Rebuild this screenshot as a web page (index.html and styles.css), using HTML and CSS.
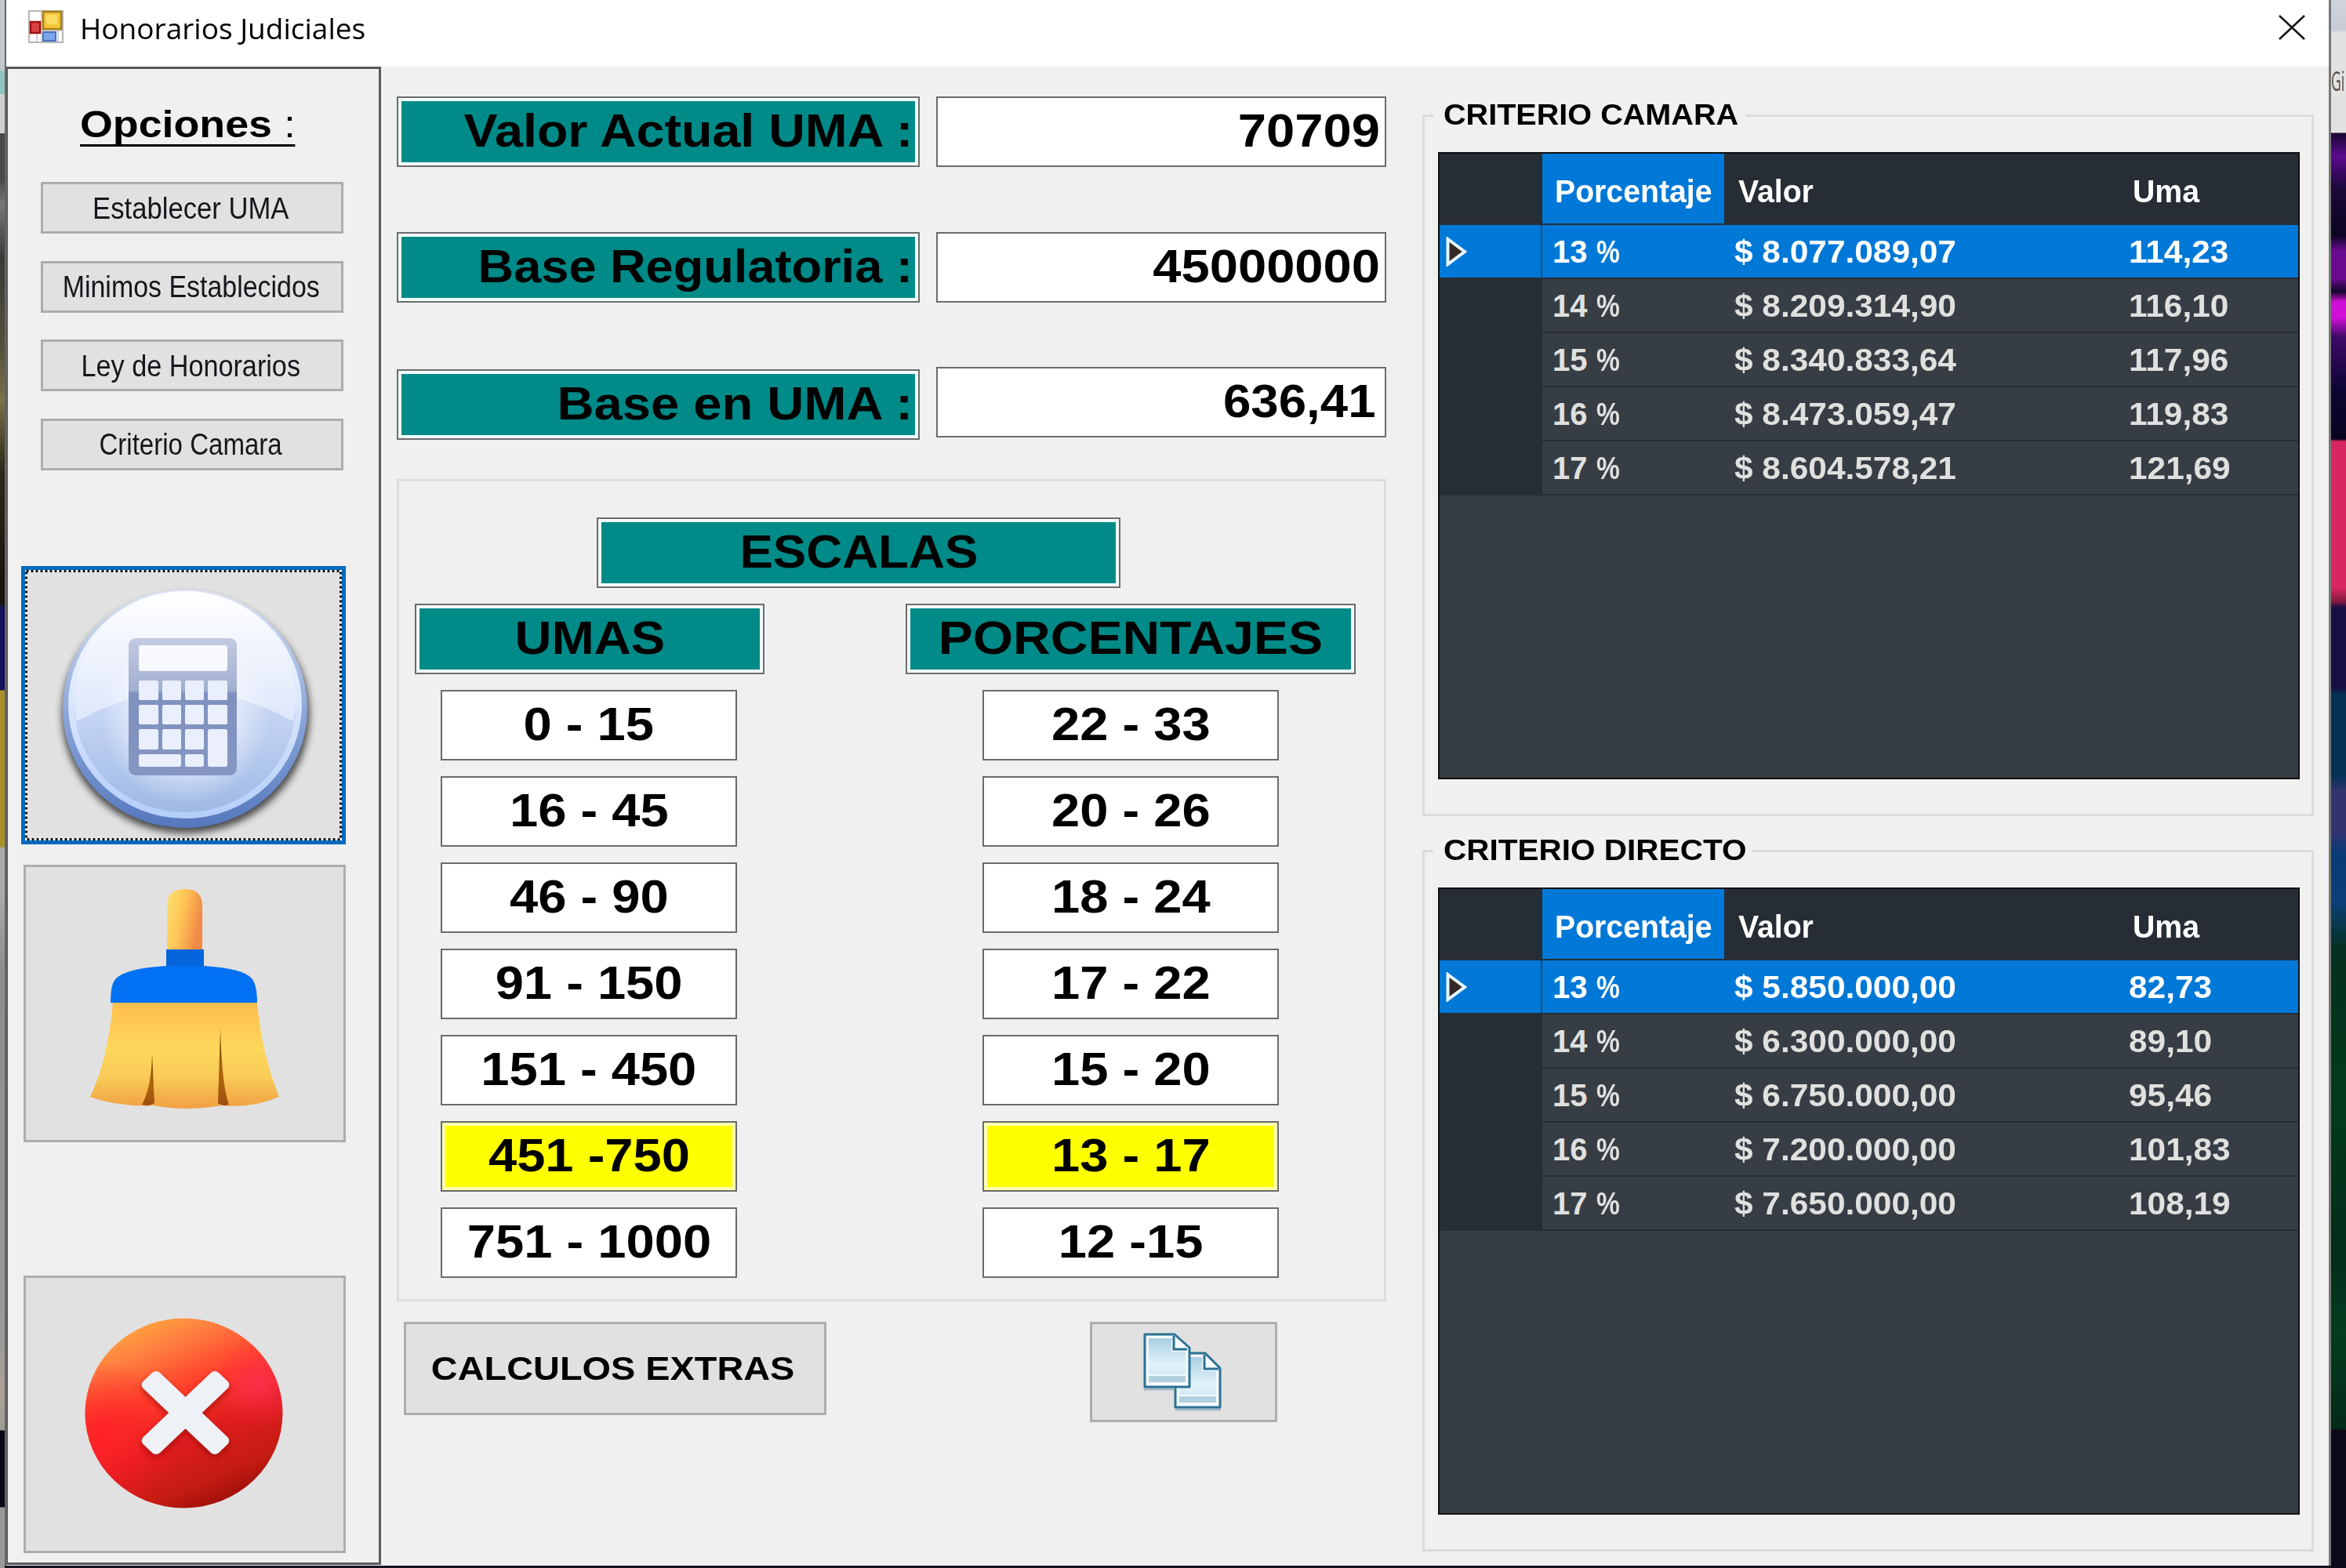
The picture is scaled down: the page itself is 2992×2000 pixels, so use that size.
FILE: index.html
```html
<!DOCTYPE html>
<html lang="es">
<head>
<meta charset="utf-8">
<title>Honorarios Judiciales</title>
<link rel="stylesheet" href="styles.css">
</head>
<body>
<div class="desk desk-left"></div>
<main class="window">
  <header class="titlebar">
    <svg class="app-icon" viewBox="0 0 45 42" width="45" height="42">
      <rect x="1" y="1" width="43" height="40" fill="#fff" stroke="#b5b5b5" stroke-width="2"/>
      <path d="M17 1v40M1 26h43M11 26v15M38 26v15" stroke="#c4c4c4" stroke-width="1.5"/>
      <rect x="19" y="2" width="23" height="22" fill="#f3c738" stroke="#a8801c" stroke-width="2.5"/>
      <rect x="23" y="6" width="14" height="12" fill="#fbdc62"/>
      <rect x="3" y="15" width="12" height="14" fill="#dc4242" stroke="#a01212" stroke-width="2.5"/>
      <rect x="19" y="28" width="16" height="11" fill="#7ba4ea" stroke="#4a72c0" stroke-width="2"/>
    </svg>
    <h1 class="title"><span class="fit">Honorarios Judiciales</span></h1>
    <svg class="close" viewBox="0 0 34 32" width="34" height="32"><path d="M1 1L33 31M33 1L1 31" stroke="#111" stroke-width="2.4"/></svg>
  </header>
  <div class="client">
    <aside class="sidebar">
      <h2 class="options"><span class="fit"><b>Opciones</b> :</span></h2>
      <nav class="menu">
        <button class="btn"><span class="fit">Establecer UMA</span></button>
        <button class="btn"><span class="fit">Minimos Establecidos</span></button>
        <button class="btn"><span class="fit">Ley de Honorarios</span></button>
        <button class="btn"><span class="fit">Criterio Camara</span></button>
      </nav>
      <button class="tile tile-focus" aria-label="Calcular">
        <svg viewBox="27 722 414 355" width="414" height="355">
          <defs>
            <linearGradient id="rim" x1="0" y1="0" x2="0" y2="1"><stop offset="0" stop-color="#dfe6f5"/><stop offset=".5" stop-color="#8ea9dc"/><stop offset="1" stop-color="#5577bd"/></linearGradient>
            <linearGradient id="rim2" x1="0" y1="0" x2="0" y2="1"><stop offset="0" stop-color="#fff"/><stop offset="1" stop-color="#b4cdfa"/></linearGradient>
            <linearGradient id="body" x1="0" y1="0" x2="0" y2="1"><stop offset="0" stop-color="#fff"/><stop offset=".45" stop-color="#cbd9f5"/><stop offset="1" stop-color="#9fb9e6"/></linearGradient>
            <linearGradient id="gloss" x1="0" y1="0" x2="0" y2="1"><stop offset="0" stop-color="#fff"/><stop offset="1" stop-color="#dde7fb"/></linearGradient>
            <linearGradient id="calc" x1="0" y1="0" x2="0" y2="1"><stop offset="0" stop-color="#c3cae0"/><stop offset=".38" stop-color="#a2afd0"/><stop offset=".4" stop-color="#7f91bf"/><stop offset="1" stop-color="#8596c2"/></linearGradient>
            <radialGradient id="glow"><stop offset="0" stop-color="#fff" stop-opacity=".9"/><stop offset=".5" stop-color="#fff" stop-opacity=".6"/><stop offset="1" stop-color="#fff" stop-opacity="0"/></radialGradient>
            <filter id="soft" x="-20%" y="-20%" width="140%" height="140%"><feGaussianBlur stdDeviation="5"/></filter>
          </defs>
          <ellipse cx="237" cy="911" rx="158" ry="152" fill="#333" opacity=".85" filter="url(#soft)"/>
          <ellipse cx="236" cy="904" rx="156" ry="152" fill="url(#rim)"/>
          <ellipse cx="236" cy="899" rx="149" ry="145" fill="url(#rim2)"/>
          <ellipse cx="236" cy="900" rx="141" ry="136" fill="url(#body)"/>
          <path d="M98 920A141 136 0 1 1 374 920Q236 844 98 920Z" fill="url(#gloss)"/>
          <ellipse cx="236" cy="915" rx="108" ry="110" fill="url(#glow)"/>
          <rect x="164" y="814" width="138" height="175" rx="9" fill="url(#calc)"/>
          <g fill="#e9effc">
            <rect x="177" y="823" width="113" height="33" rx="3" fill="#f7f9fe"/>
            <rect x="177" y="868" width="25" height="25" rx="2"/><rect x="207" y="868" width="24" height="25" rx="2"/><rect x="236" y="868" width="24" height="25" rx="2"/><rect x="265" y="868" width="25" height="25" rx="2"/>
            <rect x="177" y="899" width="25" height="25" rx="2"/><rect x="207" y="899" width="24" height="25" rx="2"/><rect x="236" y="899" width="24" height="25" rx="2"/><rect x="265" y="899" width="25" height="25" rx="2"/>
            <rect x="177" y="930" width="25" height="26" rx="2"/><rect x="207" y="930" width="24" height="26" rx="2"/><rect x="236" y="930" width="24" height="26" rx="2"/><rect x="265" y="930" width="25" height="48" rx="3"/>
            <rect x="177" y="962" width="54" height="16" rx="3"/><rect x="236" y="962" width="24" height="16" rx="3"/>
          </g>
          <rect x="33.500" y="728.500" width="401" height="342" fill="none" stroke="#fff" stroke-width="3"/>
          <rect x="33.500" y="728.500" width="401" height="342" fill="none" stroke="#111" stroke-width="3" stroke-dasharray="3 3"/>
        </svg>
      </button>
      <button class="tile tile-clean" aria-label="Limpiar">
        <svg viewBox="30 1103 411 354" width="411" height="354">
          <defs>
            <linearGradient id="handle" x1="0" y1="0" x2="1" y2=".35"><stop offset="0" stop-color="#ffe173"/><stop offset=".5" stop-color="#ffc555"/><stop offset="1" stop-color="#f08a45"/></linearGradient>
            <linearGradient id="skirt" x1="0" y1="0" x2="0" y2="1"><stop offset="0" stop-color="#ffbf4d"/><stop offset=".45" stop-color="#fdd75c"/><stop offset=".7" stop-color="#f9cb57"/><stop offset="1" stop-color="#f0a043"/></linearGradient>
            <linearGradient id="slit" x1="0" y1="0" x2="0" y2="1"><stop offset="0" stop-color="#7a4a08"/><stop offset=".6" stop-color="#b0660c"/><stop offset="1" stop-color="#9c5010"/></linearGradient>
          </defs>
          <path d="M213 1212V1156Q213 1134 236 1134Q258 1134 258 1156V1212Z" fill="url(#handle)"/>
          <path d="M144 1279H328Q334 1345 356 1399Q320 1414 284 1410Q236 1418 196 1410Q150 1412 115 1399Q138 1350 144 1279Z" fill="url(#skirt)"/>
          <path d="M194 1344Q193 1388 181 1409Q190 1412 197 1407Z" fill="url(#slit)"/>
          <path d="M281 1312Q283 1385 292 1409Q284 1412 278 1407Z" fill="url(#slit)"/>
          <path d="M212 1211H260V1232Q310 1235 321 1248Q328 1256 328 1279H141Q141 1256 147 1249Q160 1235 212 1232Z" fill="#0071f3"/>
          <path d="M212 1211H260V1232H212Z" fill="#0565dc"/>
        </svg>
      </button>
      <button class="tile tile-exit" aria-label="Salir">
        <svg viewBox="30 1627 411 354" width="411" height="354">
          <defs>
            <linearGradient id="red" x1=".25" y1="0" x2=".7" y2="1"><stop offset="0" stop-color="#ffaa3c"/><stop offset=".17" stop-color="#ff8040"/><stop offset=".4" stop-color="#ff3f2a"/><stop offset=".62" stop-color="#e01c1e"/><stop offset=".85" stop-color="#c41c12"/><stop offset="1" stop-color="#970c0a"/></linearGradient>
            <radialGradient id="pink" cx=".88" cy=".34" r=".24"><stop offset="0" stop-color="#ff2f58" stop-opacity=".75"/><stop offset="1" stop-color="#ff2f48" stop-opacity="0"/></radialGradient>
            <radialGradient id="left" cx=".08" cy=".62" r=".4"><stop offset="0" stop-color="#ff1f28" stop-opacity=".9"/><stop offset="1" stop-color="#ff1f28" stop-opacity="0"/></radialGradient>
            <filter id="soft2" x="-20%" y="-20%" width="140%" height="140%"><feGaussianBlur stdDeviation="4"/></filter>
          </defs>
          <ellipse cx="234.500" cy="1802.500" rx="126" ry="121" fill="url(#red)"/>
          <ellipse cx="234.500" cy="1802.500" rx="126" ry="121" fill="url(#left)"/>
          <ellipse cx="234.500" cy="1802.500" rx="126" ry="121" fill="url(#pink)"/>
          <g transform="translate(236.500 1806) scale(1 .95)" fill="#8c0808" opacity=".65" filter="url(#soft2)"><rect x="-68" y="-15" width="136" height="30" rx="7" transform="rotate(45)"/><rect x="-68" y="-15" width="136" height="30" rx="7" transform="rotate(-45)"/></g>
          <g transform="translate(236.500 1802) scale(1 .95)" fill="#eef1f6"><rect x="-68" y="-15" width="136" height="30" rx="7" transform="rotate(45)"/><rect x="-68" y="-15" width="136" height="30" rx="7" transform="rotate(-45)"/></g>
        </svg>
      </button>
    </aside>

    <section class="center">
      <div class="row"><label class="tag"><span class="fit">Valor Actual UMA :</span></label><output class="box"><span class="fit">70709</span></output></div>
      <div class="row"><label class="tag"><span class="fit">Base Regulatoria :</span></label><output class="box"><span class="fit">45000000</span></output></div>
      <div class="row row-last"><label class="tag"><span class="fit">Base en UMA :</span></label><output class="box"><span class="fit">636,41</span></output></div>
      <div class="scales">
        <div class="tag tag-scales"><span class="fit">ESCALAS</span></div>
        <div class="columns">
          <div class="column column-umas">
            <div class="tag"><span class="fit">UMAS</span></div>
            <div class="box"><span class="fit">0 - 15</span></div>
            <div class="box"><span class="fit">16 - 45</span></div>
            <div class="box"><span class="fit">46 - 90</span></div>
            <div class="box"><span class="fit">91 - 150</span></div>
            <div class="box"><span class="fit">151 - 450</span></div>
            <div class="box box-active"><span class="fit">451 -750</span></div>
            <div class="box"><span class="fit">751 - 1000</span></div>
          </div>
          <div class="column column-pct">
            <div class="tag"><span class="fit">PORCENTAJES</span></div>
            <div class="box"><span class="fit">22 - 33</span></div>
            <div class="box"><span class="fit">20 - 26</span></div>
            <div class="box"><span class="fit">18 - 24</span></div>
            <div class="box"><span class="fit">17 - 22</span></div>
            <div class="box"><span class="fit">15 - 20</span></div>
            <div class="box box-active"><span class="fit">13 - 17</span></div>
            <div class="box"><span class="fit">12 -15</span></div>
          </div>
        </div>
      </div>
      <div class="actions">
        <button class="btn btn-extras"><span class="fit">CALCULOS EXTRAS</span></button>
        <button class="btn btn-copy" aria-label="Copiar">
          <svg viewBox="1452 1692 112 112" width="112" height="112">
            <defs><linearGradient id="page" x1="0" y1="0" x2="0" y2="1"><stop offset="0" stop-color="#a9cfe2"/><stop offset=".75" stop-color="#e3f3fa"/><stop offset="1" stop-color="#d3e9f4"/></linearGradient></defs>
            <path d="M1499 1724H1537L1556 1743V1793H1499Z" fill="#f4fbfe" stroke="#2b7193" stroke-width="3" stroke-linejoin="round"/>
            <path d="M1504 1729H1533V1747H1551V1777H1504Z" fill="url(#page)"/>
            <path d="M1504 1779H1551V1787H1504Z" fill="#b3d0df"/>
            <path d="M1536 1726V1744H1554" fill="none" stroke="#2b7193" stroke-width="3"/>
            <path d="M1460 1700H1498L1517 1717V1767H1460Z" fill="#f4fbfe" stroke="#2b7193" stroke-width="3" stroke-linejoin="round"/>
            <path d="M1465 1705H1494V1722H1512V1751H1465Z" fill="url(#page)"/>
            <path d="M1465 1753H1512V1761H1465Z" fill="#b3d0df"/>
            <path d="M1497 1702V1719H1514" fill="none" stroke="#2b7193" stroke-width="3"/>
            <path d="M1459 1770H1497M1499 1796H1557" stroke="#2b7193" stroke-width="3" opacity=".35"/>
          </svg>
        </button>
      </div>
    </section>

    <section class="right">
      <fieldset class="group">
        <legend><span class="fit">CRITERIO CAMARA</span></legend>
        <div class="grid">
          <div class="line head"><i class="mark"></i><div class="c1"><span class="fit">Porcentaje</span></div><div class="c2"><span class="fit">Valor</span></div><div class="c3"><span class="fit">Uma</span></div></div>
          <div class="line on"><i class="mark"><svg viewBox="0 0 28 38" width="28" height="38"><path d="M2.500 3L24 19L2.500 35Z" fill="#332a26" stroke="#e8f6ff" stroke-width="4"/></svg></i><div class="c1">13 <span class="pc">%</span></div><div class="c2"><span class="fit">$ 8.077.089,07</span></div><div class="c3"><span class="fit">114,23</span></div></div>
          <div class="line"><i class="mark"></i><div class="c1">14 <span class="pc">%</span></div><div class="c2"><span class="fit">$ 8.209.314,90</span></div><div class="c3"><span class="fit">116,10</span></div></div>
          <div class="line"><i class="mark"></i><div class="c1">15 <span class="pc">%</span></div><div class="c2"><span class="fit">$ 8.340.833,64</span></div><div class="c3"><span class="fit">117,96</span></div></div>
          <div class="line"><i class="mark"></i><div class="c1">16 <span class="pc">%</span></div><div class="c2"><span class="fit">$ 8.473.059,47</span></div><div class="c3"><span class="fit">119,83</span></div></div>
          <div class="line"><i class="mark"></i><div class="c1">17 <span class="pc">%</span></div><div class="c2"><span class="fit">$ 8.604.578,21</span></div><div class="c3"><span class="fit">121,69</span></div></div>
        </div>
      </fieldset>
      <fieldset class="group group-direct">
        <legend><span class="fit">CRITERIO DIRECTO</span></legend>
        <div class="grid">
          <div class="line head"><i class="mark"></i><div class="c1"><span class="fit">Porcentaje</span></div><div class="c2"><span class="fit">Valor</span></div><div class="c3"><span class="fit">Uma</span></div></div>
          <div class="line on"><i class="mark"><svg viewBox="0 0 28 38" width="28" height="38"><path d="M2.500 3L24 19L2.500 35Z" fill="#332a26" stroke="#e8f6ff" stroke-width="4"/></svg></i><div class="c1">13 <span class="pc">%</span></div><div class="c2"><span class="fit">$ 5.850.000,00</span></div><div class="c3"><span class="fit">82,73</span></div></div>
          <div class="line"><i class="mark"></i><div class="c1">14 <span class="pc">%</span></div><div class="c2"><span class="fit">$ 6.300.000,00</span></div><div class="c3"><span class="fit">89,10</span></div></div>
          <div class="line"><i class="mark"></i><div class="c1">15 <span class="pc">%</span></div><div class="c2"><span class="fit">$ 6.750.000,00</span></div><div class="c3"><span class="fit">95,46</span></div></div>
          <div class="line"><i class="mark"></i><div class="c1">16 <span class="pc">%</span></div><div class="c2"><span class="fit">$ 7.200.000,00</span></div><div class="c3"><span class="fit">101,83</span></div></div>
          <div class="line"><i class="mark"></i><div class="c1">17 <span class="pc">%</span></div><div class="c2"><span class="fit">$ 7.650.000,00</span></div><div class="c3"><span class="fit">108,19</span></div></div>
        </div>
      </fieldset>
    </section>
  </div>
</main>
<div class="desk desk-right"><span class="behind">Gi</span></div>
</body>
</html>
```
FILE: styles.css
```css
* { box-sizing: border-box; }
body {
  margin: 0; width: 2992px; height: 2000px; overflow: hidden; display: flex;
  background: #14141e; font-family: "Liberation Sans", Arial, sans-serif; color: #000;
}
h1, h2 { margin: 0; font-weight: 400; }
button { font: inherit; color: inherit; padding: 0; margin: 0; }
svg { display: block; flex: none; }
.fit { display: inline-block; white-space: nowrap; transform: scaleX(var(--sx, 1)); }

/* desktop visible behind both sides of the window */
.desk { flex: none; height: 2000px; }
.desk-left {
  width: 6px;
  background: linear-gradient(#c4c8cc 0 90px, #8fc4bf 90px 120px, #d0d0d0 120px 170px, #4a4a4a 170px 230px, #777 260px, #3a3a38 330px, #55533c 450px, #77734a 510px, #2c2a1a 600px, #14120a 770px, #15125a 775px 880px, #a8902a 881px 1080px, #aaa 1082px 1140px, #8c8c8c 1240px, #9a9a9a 1700px, #aaa295 1780px, #9a9a94 1824px, #08060f 1825px 1922px, #999 1923px);
}
.desk-right {
  width: 19px;
  background: linear-gradient(#cfd3dc 0, #c8ccd6 38px, #e2e2e2 42px 169px, #1a0633 170px, #5b0a8c 200px, #1b0838 240px, #0a0420 300px, #6a0a90 320px 355px, #12052a 372px, #d010d8 385px 405px, #3c0a66 430px, #0a0530 500px, #080420 560px, #d82660 563px 750px, #7c1840 768px, #160e44 775px 878px, #063054 885px 990px, #32346e 1010px 1060px, #083a74 1090px, #0c4078 1150px, #04301f 1210px, #033a1c 1400px, #032c1a 1600px, #043c20 1700px, #032a18 1822px, #0c081a 1825px);
}
.behind { display: block; width: 34px; margin-top: 82px; font: 35px/42px "Noto Sans", sans-serif; color: #5f5650; transform: scaleX(.5); transform-origin: left; }

.window { flex: none; width: 2967px; height: 1997px; background: #f0f0f0; border-left: 2px solid #666; border-right: 3px solid #777; display: flex; flex-direction: column; }
.titlebar { flex: none; height: 85px; background: #fff; display: flex; align-items: flex-start; padding: 13px 30px 0 28px; }
.title { margin: -1px 0 0 21px; font: 36px/50px "Open Sans", sans-serif; }
.title .fit { --sx: 1.028; transform-origin: left; }
.close { margin: 6px 0 0 auto; }
.client { flex: 1; min-height: 0; display: flex; align-items: flex-start; }

.sidebar { width: 478px; height: 1911px; border: 3px solid #5a5a5a; border-left-width: 2px; display: flex; flex-direction: column; align-items: flex-start; }
.options { margin: 43px 0 0 92px; height: 101px; font-size: 48px; line-height: 56px; }
.options .fit { --sx: 1.12; transform-origin: left; border-bottom: 3px solid #000; line-height: 50px; }
.menu { margin-left: 42px; display: flex; flex-direction: column; gap: 34.600px; }
.btn { display: flex; align-items: center; justify-content: center; background: #e1e1e1; border: 3px solid #adadad; border-radius: 0; }
.menu .btn { width: 386px; height: 66px; padding: 2px 3px 0 0; font-size: 38px; color: #16161c; }
.menu .btn .fit { --sx: .912; }
.menu .btn:nth-child(2) .fit { --sx: .893; }
.menu .btn:nth-child(3) .fit { --sx: .9; }
.menu .btn:nth-child(4) .fit { --sx: .87; }
.tile { display: flex; align-items: center; justify-content: center; border: 3px solid #adadad; background: #e1e1e1; width: 411px; height: 354px; margin-left: 20px; overflow: hidden; }
.tile-focus { border: 5px solid #0069bd; width: 414px; height: 355px; margin: 122px 0 0 17px; }
.tile-clean { margin-top: 26px; }
.tile-exit { margin-top: 170px; }

.center { width: 1262px; margin-left: 20px; padding-top: 38px; }
.tag, .box { display: block; height: 90px; border: 2px solid #6b6b6b; font-size: 60px; line-height: 84px; font-weight: 700; text-align: center; }
.tag { background: #008a88; box-shadow: inset 0 0 0 4px #f2ffff; }
.tag .fit, .box .fit { --sx: 1.085; }
.box { background: #fff; }
.box-active { background: #ff0; box-shadow: inset 0 0 0 4px #ffffb0; }
.row { display: flex; justify-content: space-between; height: 90px; margin-bottom: 83px; }
.row .tag { width: 667px; text-align: right; padding-right: 7px; }
.row .box { width: 574px; text-align: right; padding-right: 6px; }
.row .fit { transform-origin: right; }
.row:nth-child(1) .tag .fit { --sx: 1.076; }
.row:nth-child(2) { margin-bottom: 82px; }
.row:nth-child(2) .tag .fit { --sx: 1.052; }
.row-last { margin-bottom: 53px; }
.row-last .tag { margin-top: 3px; }
.row-last .box { padding-right: 11px; }
.row-last .box .fit { --sx: 1.06; }
.scales { height: 1049px; border: 3px solid #dcdcdc; padding-top: 46px; }
.tag-scales { width: 668px; margin-left: 252px; }
.tag-scales .fit { --sx: 1.06; }
.columns { display: flex; padding: 20px 36px 0 20px; justify-content: space-between; }
.column { display: flex; flex-direction: column; gap: 20px; }
.column .box { width: 378px; }
.column-umas { width: 446px; }
.column-umas .box { margin-left: 33px; }
.column-pct { width: 574px; }
.column-pct .tag .fit { --sx: 1.1; }
.column-pct .box { margin-left: 98px; }
.actions { display: flex; margin: 26px 0 0 9px; align-items: flex-start; }
.btn-extras { width: 539px; height: 119px; padding-right: 5px; font-size: 43px; font-weight: 700; }
.btn-extras .fit { --sx: 1.09; }
.btn-copy { width: 239px; height: 128px; margin-left: 336px; padding-right: 3px; }

.right { width: 1137px; margin-left: 46px; padding-top: 41px; }
.group { margin: 0 0 23px; padding: 0 15px 0 17px; height: 915px; border: 3px solid #dcdcdc; display: block; min-width: 0; }
.group legend { padding: 0 14px 0 13px; margin-left: -6px; font-size: 37px; line-height: 42px; font-weight: 700; height: 42px; }
.group legend .fit { --sx: 1.07; transform-origin: left; margin-right: 20px; }
.group-direct { margin-bottom: 0; }
.group-direct legend .fit { --sx: 1.095; margin-right: 26px; }
.grid { margin-top: 26px; height: 800px; background: #373d45; border: 2px solid #101010; font-size: 40px; font-weight: 700; }
.line { display: grid; grid-template-columns: 131px 232px 503px 1fr; grid-template-rows: 100%; height: 69px; line-height: 68px; color: #e0e0de; }
.line > div { border-bottom: 2px solid #272d34; }
.mark { background: #272d34; display: flex; align-items: center; padding-left: 8px; }
.line .fit { transform-origin: left; --sx: 1.06; }
.c1 { padding-left: 13px; }
.c2 { padding-left: 13px; }
.c3 { padding-left: 13px; }
.pc { display: inline-block; transform: scaleX(.84); transform-origin: left; }
.head { height: 91px; line-height: 97px; background: #272d34; color: #fff; }
.head .fit { --sx: .98; }
.head .c1 { background: #0078d7; padding-left: 16px; }
.head .c2 { padding-left: 18px; }
.head .c3 { padding-left: 18px; }
.on, .on .mark { background: #0078d7; color: #fff; }
.on .mark { border-right: 2px solid #1b4a78; border-bottom: 2px solid #272d34; }
```
